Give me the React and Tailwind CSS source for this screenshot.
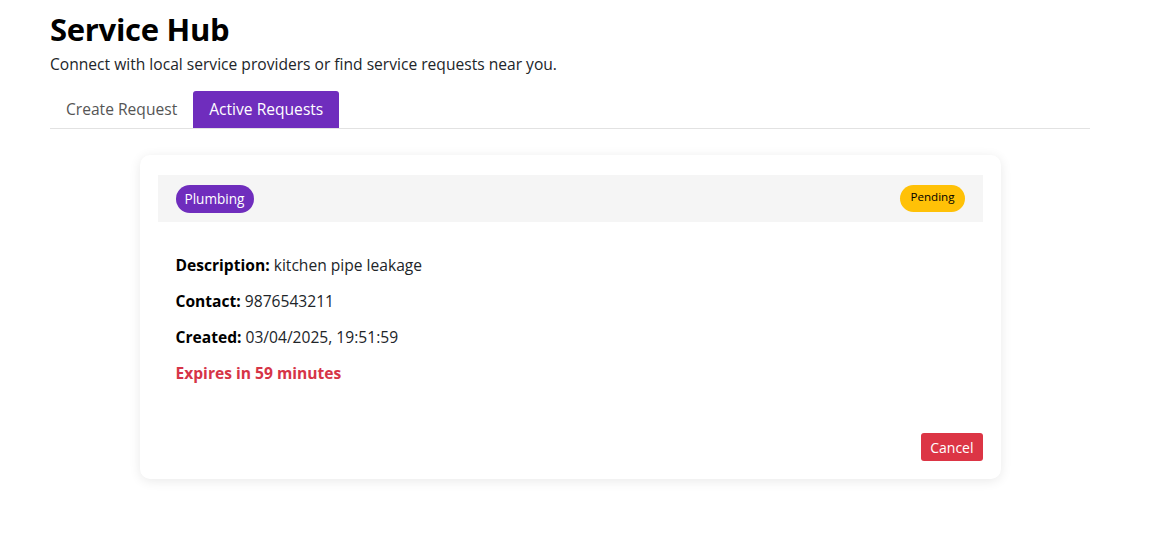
import React, { useState } from "react";

const font = { fontFamily: '"Open Sans", "Liberation Sans", sans-serif' };

const Field = ({ label, value }) => (
  <p className="text-[15.6px] leading-6 text-[#212529] mb-3">
    <span className="font-bold text-black">{label}:</span> {value}
  </p>
);

export default function App() {
  const [tab, setTab] = useState("active");

  return (
    <div className="min-h-screen bg-white" style={font}>
      <div className="w-[1040px] ml-[50px] pt-[9px]">
        <h1 className="text-[31px] leading-10 font-bold text-black tracking-[-0.3px]">Service Hub</h1>
        <p className="text-[15.6px] leading-6 text-[#212529] mt-[3px]">
          Connect with local service providers or find service requests near you.
        </p>

        <div className="flex mt-[15px] border-b border-[#e2e2e2]">
          <button
            onClick={() => setTab("create")}
            className={`h-[37px] px-4 text-[15.6px] rounded-t-[3px] ${
              tab === "create" ? "bg-[#6f2dbd] text-white" : "text-[#555]"
            }`}
          >
            Create Request
          </button>
          <button
            onClick={() => setTab("active")}
            className={`h-[37px] px-4 text-[15.6px] rounded-t-[3px] ${
              tab === "active" ? "bg-[#6f2dbd] text-white" : "text-[#555]"
            }`}
          >
            Active Requests
          </button>
        </div>

        <div className="w-[861px] mx-auto mt-[26px] bg-white rounded-[10px] shadow-[0_2px_12px_rgba(0,0,0,0.09)] px-[18px] pt-[20px] pb-[18px]">
          <div className="flex items-start justify-between bg-[#f5f5f5] px-[18px] pt-[10px] h-[47px]">
            <span className="inline-flex items-center h-[28px] px-[9px] rounded-full bg-[#6f2dbd] text-white text-[13.6px]">
              Plumbing
            </span>
            <span className="inline-flex items-start pt-[3px] h-[27px] px-[10px] rounded-full bg-[#ffc107] text-black text-[11.6px]">
              Pending
            </span>
          </div>

          <div className="px-[18px] pt-[31px]">
            <Field label="Description" value="kitchen pipe leakage" />
            <Field label="Contact" value="9876543211" />
            <Field label="Created" value="03/04/2025, 19:51:59" />
            <p className="text-[15.6px] leading-6 font-bold text-[#d63447]">Expires in 59 minutes</p>
          </div>

          <div className="flex justify-end mt-[48px]">
            <button className="h-[28px] px-[9px] rounded-[3px] bg-[#dc3545] text-white text-[14px]">
              Cancel
            </button>
          </div>
        </div>
      </div>
    </div>
  );
}
